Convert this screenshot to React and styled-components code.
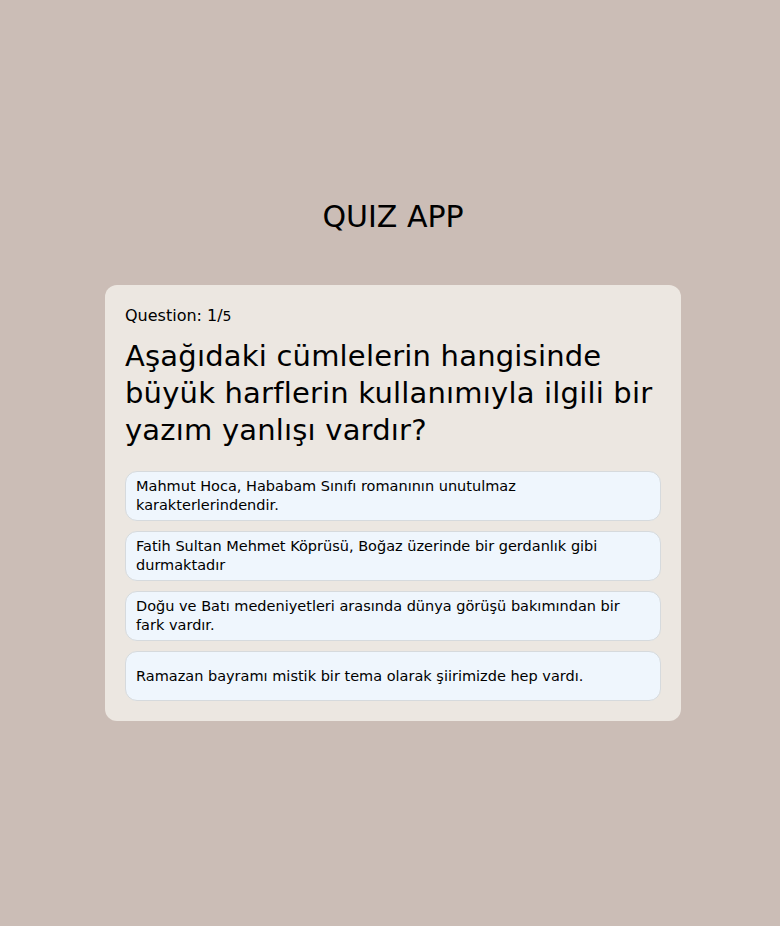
import React from 'react'
import styled, { createGlobalStyle } from 'styled-components'

const GlobalStyle = createGlobalStyle`
  * { box-sizing: border-box; }
  body {
    margin: 0;
    background: #cbbdb6;
    font-family: "DejaVu Sans", Inter, sans-serif;
    color: #000;
  }
`;

const Page = styled.div`
  min-height: 100vh;
  display: flex;
  flex-direction: column;
  align-items: center;
  justify-content: center;
  padding: 0 0 8px 6px;
`;

const Title = styled.h1`
  margin: 0 0 48px;
  font-size: 30px;
  font-weight: 400;
  line-height: 40px;
`;

const Card = styled.div`
  width: 576px;
  background: #ece7e1;
  border-radius: 12px;
  padding: 20px;
`;

const Counter = styled.div`
  font-size: 16px;
  font-weight: 400;
  line-height: 22px;
  span { font-size: 14px; }
`;

const Question = styled.h2`
  margin: 11px 0 22px;
  font-size: 29px;
  font-weight: 400;
  line-height: 37px;
  letter-spacing: 0.2px;
`;

const Options = styled.div`
  display: flex;
  flex-direction: column;
  gap: 10px;
`;

const Option = styled.button`
  display: flex;
  align-items: center;
  height: 50px;
  width: 100%;
  padding: 5px 10px;
  background: #eff6fd;
  border: 1px solid #d6dadd;
  border-radius: 12px;
  font-family: inherit;
  font-size: 14.5px;
  line-height: 19px;
  text-align: left;
  color: #000;
`;

const options = [
  'Mahmut Hoca, Hababam Sınıfı romanının unutulmaz karakterlerindendir.',
  'Fatih Sultan Mehmet Köprüsü, Boğaz üzerinde bir gerdanlık gibi durmaktadır',
  'Doğu ve Batı medeniyetleri arasında dünya görüşü bakımından bir fark vardır.',
  'Ramazan bayramı mistik bir tema olarak şiirimizde hep vardı.',
];

const App = () => {
  return (
    <>
      <GlobalStyle />
      <Page>
        <Title>QUIZ APP</Title>
        <Card>
          <Counter>Question: 1/<span>5</span></Counter>
          <Question>Aşağıdaki cümlelerin hangisinde büyük harflerin kullanımıyla ilgili bir yazım yanlışı vardır?</Question>
          <Options>
            {options.map((o) => (
              <Option key={o}>{o}</Option>
            ))}
          </Options>
        </Card>
      </Page>
    </>
  )
}

export default App
